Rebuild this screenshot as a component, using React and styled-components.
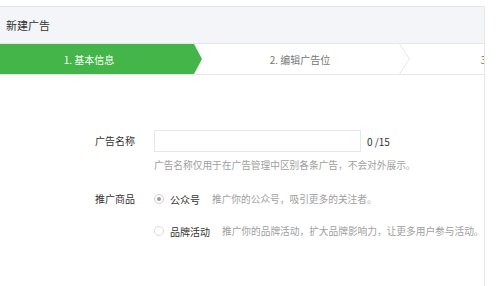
import React from 'react';
import styled, { createGlobalStyle } from 'styled-components';

const GlobalStyle = createGlobalStyle`
    html, body {
        margin: 0;
        padding: 0;
        background: #fff;
    }
    body {
        font-family: "Noto Sans CJK SC", "Noto Sans", sans-serif;
        color: #333;
    }
`;

const steps = [
    { label: '1. 基本信息', active: true },
    { label: '2. 编辑广告位' },
    { label: '3. 确认并提交' },
];

const App = () => {
    return (
        <Page>
            <GlobalStyle />
            <Card>
                <Header>新建广告</Header>
                <StepBar>
                    {steps.map(step => (
                        <Step key={step.label} $active={step.active}>
                            <StepText $active={step.active}>{step.label}</StepText>
                            {!step.active && (
                                <Chevron width="11" height="30" viewBox="0 0 11 30">
                                    <polyline points="0.5,0 10.5,15 0.5,30" fill="none" stroke="#e4e8eb" strokeWidth="1" />
                                </Chevron>
                            )}
                        </Step>
                    ))}
                </StepBar>
                <Form>
                    <Field>
                        <Label $line={22}>广告名称</Label>
                        <Control>
                            <InputLine>
                                <TextInput type="text" />
                                <Counter>0 /15</Counter>
                            </InputLine>
                            <Hint>广告名称仅用于在广告管理中区别各条广告，不会对外展示。</Hint>
                        </Control>
                    </Field>
                    <Field $gap={17}>
                        <Label $line={20}>推广商品</Label>
                        <Control>
                            <RadioList>
                                <RadioOption>
                                    <RadioDot $checked />
                                    <RadioText>公众号</RadioText>
                                    <RadioHint>推广你的公众号，吸引更多的关注者。</RadioHint>
                                </RadioOption>
                                <RadioOption>
                                    <RadioDot />
                                    <RadioText>品牌活动</RadioText>
                                    <RadioHint>推广你的品牌活动，扩大品牌影响力，让更多用户参与活动。</RadioHint>
                                </RadioOption>
                            </RadioList>
                        </Control>
                    </Field>
                </Form>
            </Card>
        </Page>
    );
};

const Page = styled.div`
    padding-top: 6px;
    width: 499px;
    height: 286px;
    box-sizing: border-box;
    overflow: hidden;
`;
const Card = styled.div`
    width: 485px;
    height: 280px;
    box-sizing: border-box;
    border-top: 1px solid #e7e7eb;
    border-right: 1px solid #e7e7eb;
    overflow: hidden;
`;
const Header = styled.div`
    height: 36px;
    line-height: 36px;
    padding-left: 6px;
    background: #f4f5f9;
    border-bottom: 1px solid #e7e7eb;
    font-size: 11px;
    color: #333;
`;
const StepBar = styled.div`
    display: flex;
    height: 30px;
    border-bottom: 1px solid #e7e7eb;
`;
const Step = styled.div`
    position: relative;
    flex: 0 0 211px;
    height: 30px;
    display: flex;
    align-items: center;
    &::before {
        content: '';
        display: ${p => (p.$active ? 'block' : 'none')};
        position: absolute;
        left: 0;
        top: 0;
        width: 202px;
        height: 30px;
        background: #44b549;
        clip-path: polygon(0 0, 194px 0, 202px 50%, 194px 100%, 0 100%);
    }
`;
const StepText = styled.span`
    position: relative;
    width: 178px;
    text-align: center;
    font-size: 10px;
    white-space: nowrap;
    color: ${p => (p.$active ? '#fff' : '#777')};
`;
const Chevron = styled.svg`
    position: absolute;
    left: 188px;
    top: 0;
`;
const Form = styled.div`
    padding: 55px 0 0 80px;
`;
const Field = styled.div`
    display: flex;
    align-items: flex-start;
    margin-top: ${p => (p.$gap ? `${p.$gap}px` : '0')};
`;
const Label = styled.div`
    width: 55px;
    margin-right: 19px;
    text-align: right;
    font-size: 10px;
    line-height: ${p => p.$line}px;
    color: #333;
`;
const Control = styled.div`
    display: flex;
    flex-direction: column;
`;
const InputLine = styled.div`
    display: flex;
    align-items: center;
    gap: 6px;
`;
const TextInput = styled.input`
    width: 207px;
    height: 22px;
    box-sizing: border-box;
    border: 1px solid #e7e7eb;
    outline: none;
    padding: 0 6px;
    font-size: 10px;
    font-family: inherit;
`;
const Counter = styled.span`
    font-size: 10px;
    color: #333;
`;
const Hint = styled.div`
    margin-top: 6px;
    font-size: 9.7px;
    line-height: 14px;
    color: #a0a0a0;
    white-space: nowrap;
`;
const RadioList = styled.div`
    display: flex;
    flex-direction: column;
    gap: 12px;
`;
const RadioOption = styled.div`
    display: flex;
    align-items: center;
    height: 20px;
    white-space: nowrap;
`;
const RadioDot = styled.span`
    width: 10px;
    height: 10px;
    box-sizing: border-box;
    border-radius: 50%;
    border: 1px solid ${p => (p.$checked ? '#cfcfcf' : '#dcdcdc')};
    margin-right: 6px;
    display: flex;
    align-items: center;
    justify-content: center;
    &::after {
        content: '';
        display: ${p => (p.$checked ? 'block' : 'none')};
        width: 4px;
        height: 4px;
        border-radius: 50%;
        background: #9a9a9a;
    }
`;
const RadioText = styled.span`
    font-size: 10px;
    color: #333;
    margin-right: 12px;
`;
const RadioHint = styled.span`
    font-size: 9.7px;
    color: #a0a0a0;
`;

export default App;
